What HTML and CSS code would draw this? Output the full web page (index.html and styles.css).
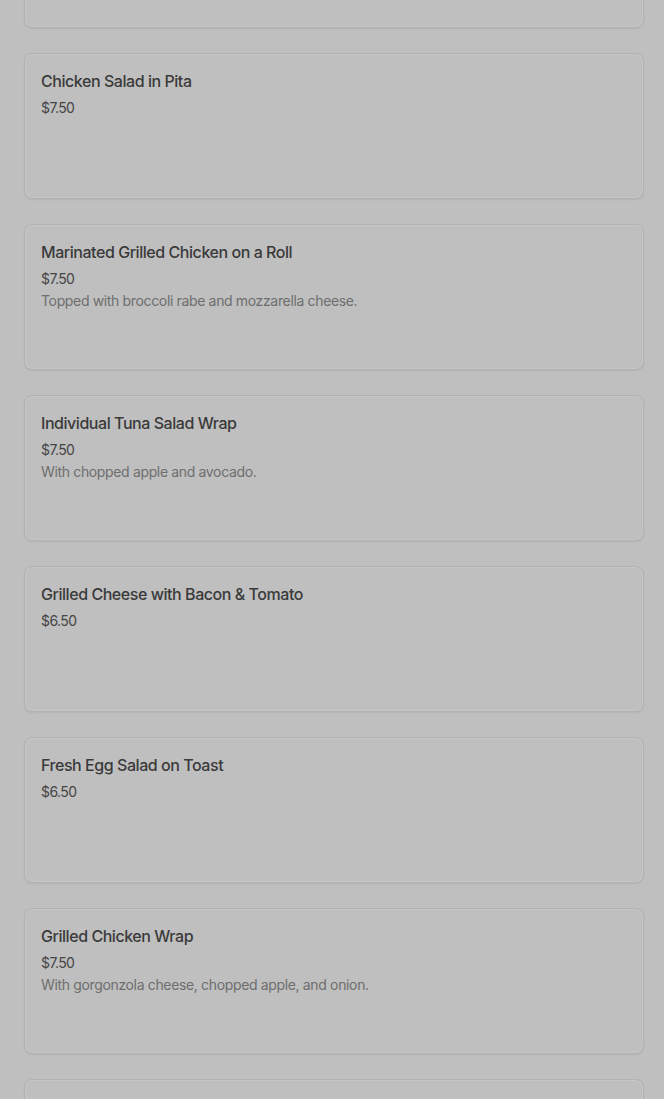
FILE: index.html
```html
<!DOCTYPE html>
<html lang="en">
<head>
    <meta charset="UTF-8">
    <meta name="viewport" content="width=device-width, initial-scale=1.0">
    <title>Menu</title>
    <link rel="stylesheet" href="styles.css">
</head>
<body>
    <div class="menu-list">
        <!-- previous item, scrolled out of view -->
        <div class="item"></div>
        <div class="item">
            <h3 class="item-name">Chicken Salad in Pita</h3>
            <p class="item-price">$7.50</p>
        </div>
        <div class="item">
            <h3 class="item-name">Marinated Grilled Chicken on a Roll</h3>
            <p class="item-price">$7.50</p>
            <p class="item-desc">Topped with broccoli rabe and mozzarella cheese.</p>
        </div>
        <div class="item">
            <h3 class="item-name">Individual Tuna Salad Wrap</h3>
            <p class="item-price">$7.50</p>
            <p class="item-desc">With chopped apple and avocado.</p>
        </div>
        <div class="item">
            <h3 class="item-name">Grilled Cheese with Bacon &amp; Tomato</h3>
            <p class="item-price">$6.50</p>
        </div>
        <div class="item">
            <h3 class="item-name">Fresh Egg Salad on Toast</h3>
            <p class="item-price">$6.50</p>
        </div>
        <div class="item">
            <h3 class="item-name">Grilled Chicken Wrap</h3>
            <p class="item-price">$7.50</p>
            <p class="item-desc">With gorgonzola cheese, chopped apple, and onion.</p>
        </div>
        <div class="item">
            <h3 class="item-name">Mediterranean Chicken Wrap</h3>
            <p class="item-price">$7.50</p>
        </div>
    </div>
</body>
</html>
```

FILE: styles.css
```css
body {
    font-family: Inter, "Noto Sans", Arial, sans-serif;
    margin: 0;
    padding: 0;
    background-color: #bfbfbf;
    overflow: hidden;
}
.menu-list {
    margin-top: -118px;
    padding: 0 20px 0 24px;
}
.item {
    box-sizing: border-box;
    height: 146px;
    margin-bottom: 25px;
    padding: 16px;
    border: 1px solid #b2b2b2;
    border-radius: 8px;
    background-color: #bfbfbf;
    box-shadow: inset 0 0 0 1px #c6c6c6, 0 1px 2px rgba(0, 0, 0, 0.06);
}
.item-name {
    margin: 0;
    font-size: 16px;
    font-weight: 500;
    line-height: 23px;
    color: #3a3a3a;
    letter-spacing: -0.45px;
}
.item-price {
    margin: 5px 0 0;
    font-size: 14px;
    line-height: 20px;
    color: #454545;
    letter-spacing: -0.6px;
}
.item-desc {
    margin: 2px 0 0;
    font-size: 14px;
    line-height: 20px;
    color: #6e6e6e;
    letter-spacing: -0.35px;
}
```
